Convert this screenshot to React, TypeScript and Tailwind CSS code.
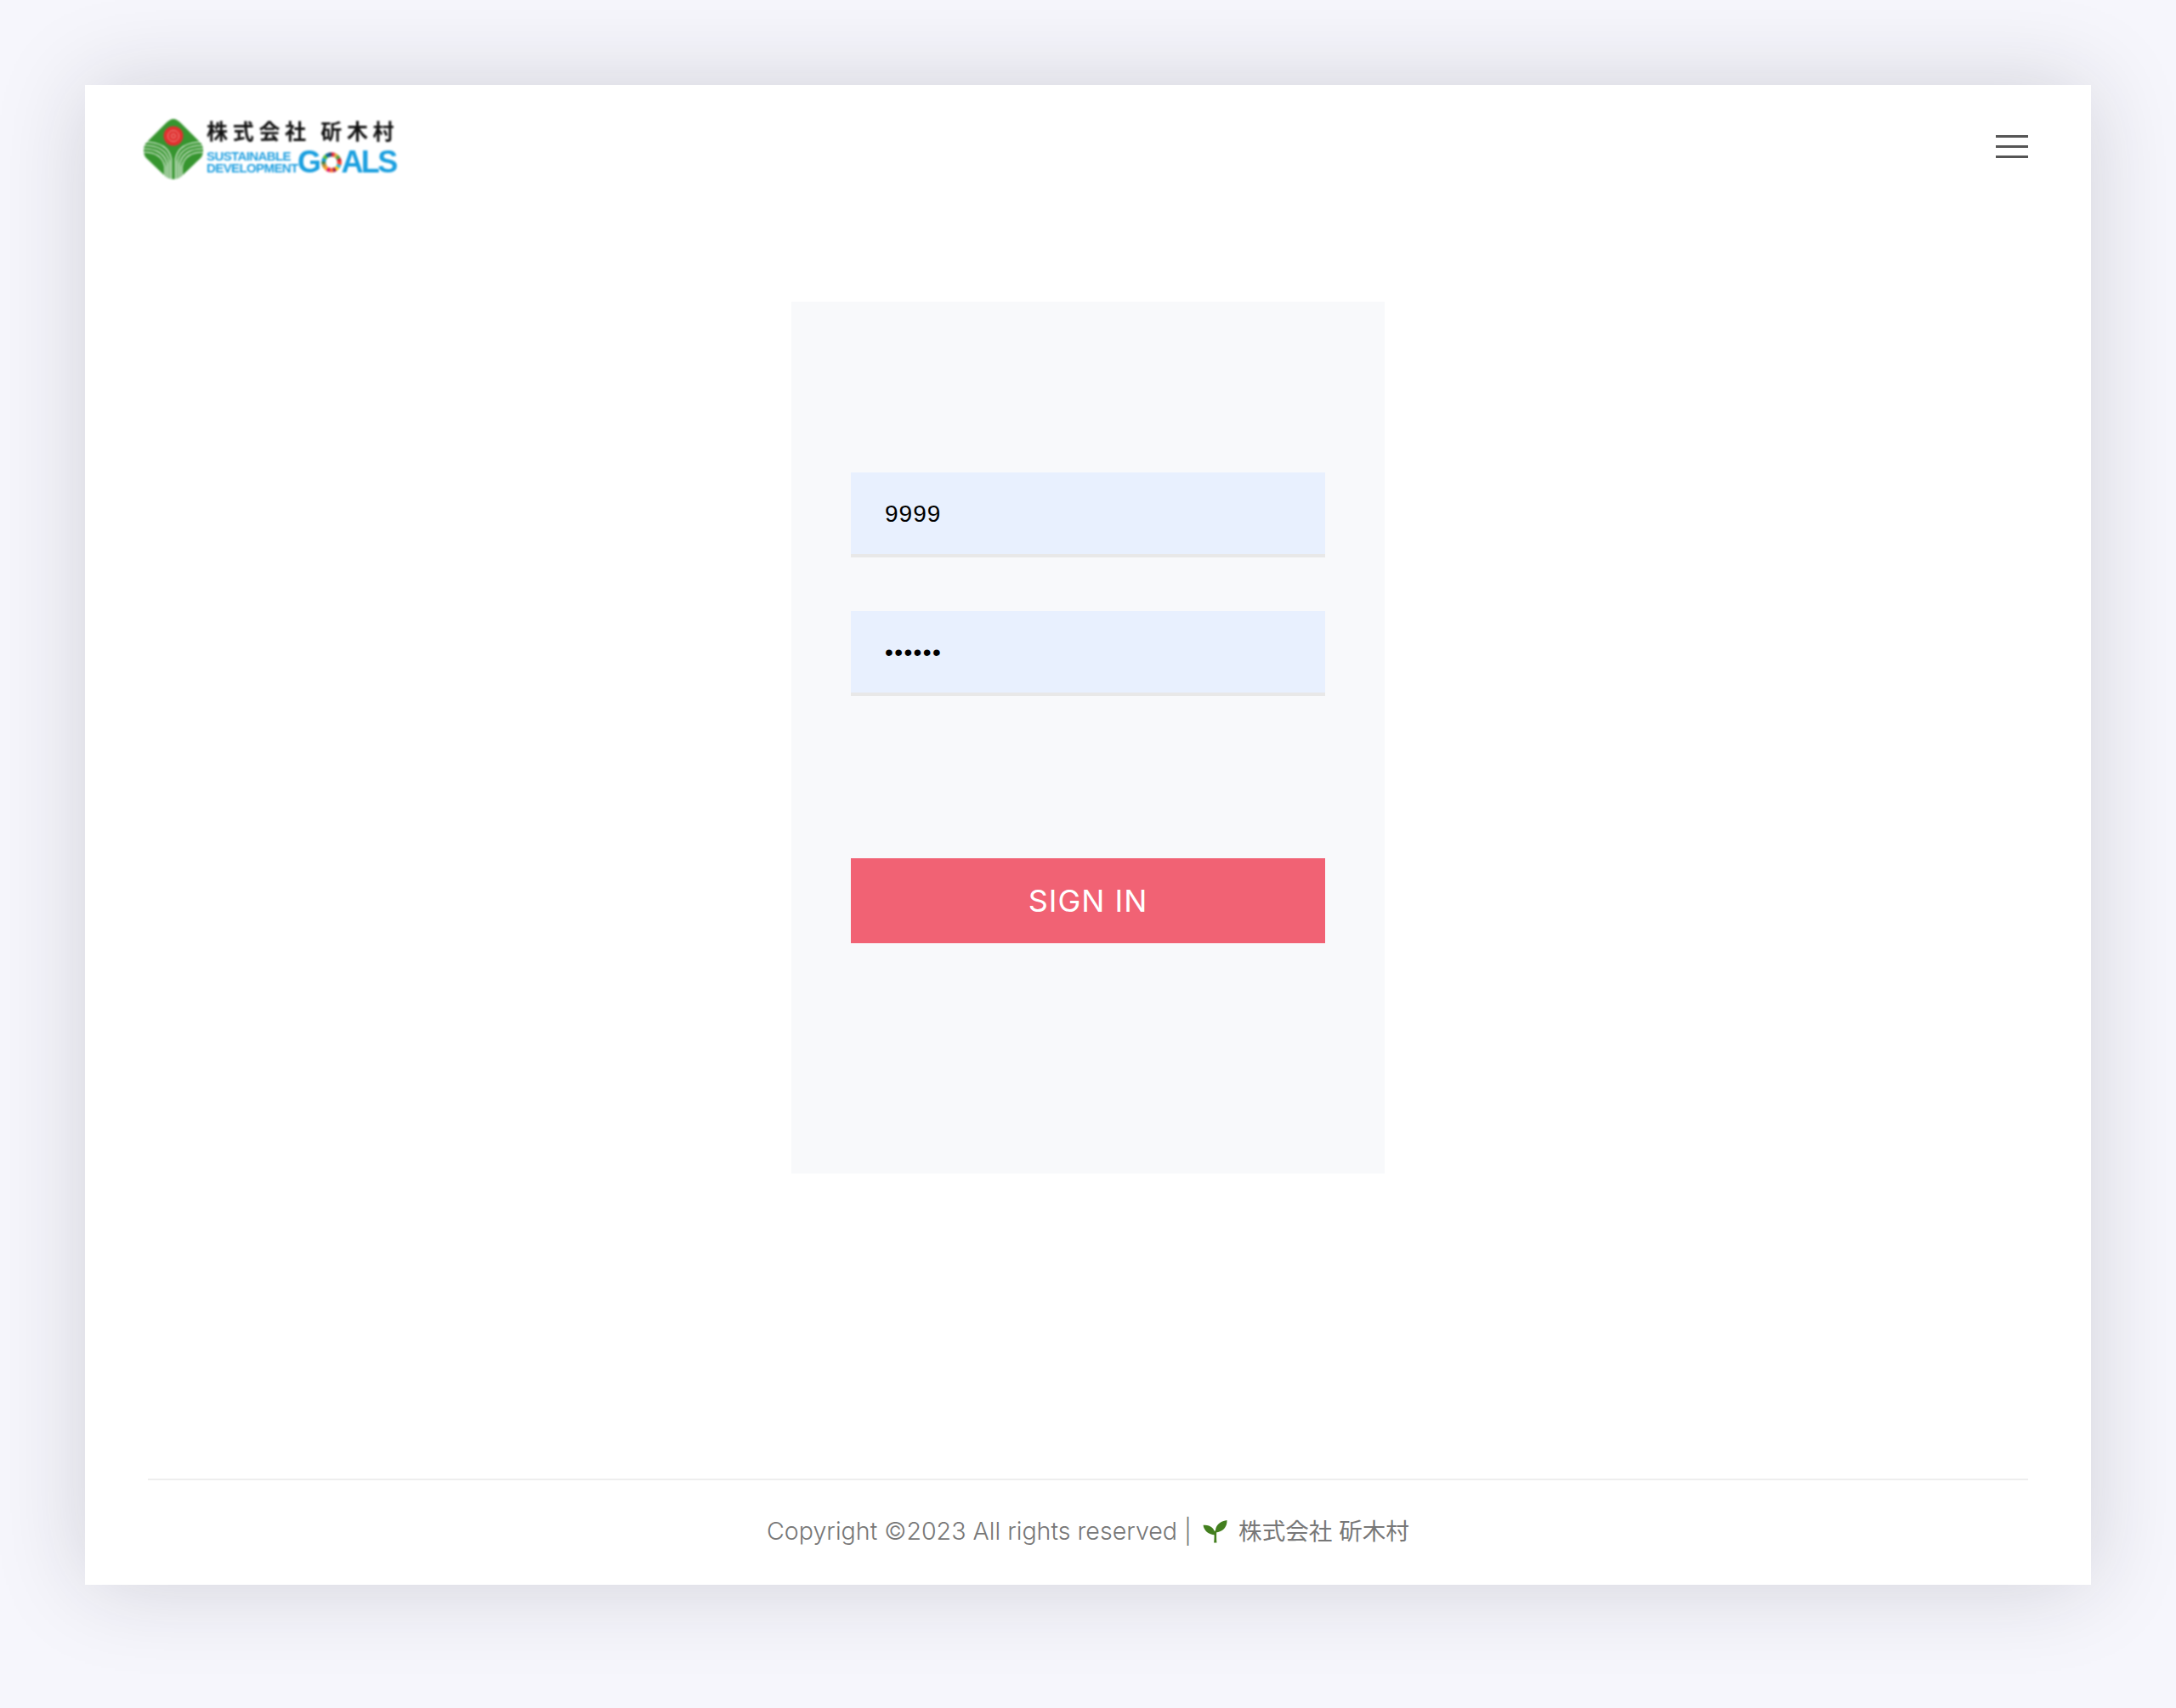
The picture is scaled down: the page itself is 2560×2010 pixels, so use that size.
import React from 'react';

const SdgWheel: React.FC = () => {
  const colors = ['#e5243b', '#dda63a', '#4c9f38', '#c5192d', '#ff3a21', '#26bde2', '#fcc30b', '#a21942', '#fd6925', '#dd1367', '#fd9d24', '#bf8b2e', '#3f7e44', '#0a97d9', '#56c02b', '#00689d', '#19486a'];
  const r = 10;
  const c = 2 * Math.PI * r;
  return (
    <svg viewBox="0 0 28 28" className="w-[26px] h-[26px] shrink-0 -rotate-90">
      {colors.map((color, i) => (
        <circle
          key={color}
          cx="14"
          cy="14"
          r={r}
          fill="none"
          stroke={color}
          strokeWidth="5.5"
          strokeDasharray={`${c / colors.length} ${c}`}
          strokeDashoffset={(-c * i) / colors.length}
        />
      ))}
    </svg>
  );
};

const Mark: React.FC = () => (
  <svg viewBox="0 0 72 74" className="w-[72px] h-[74px] shrink-0 translate-y-[3px]">
    <path d="M36 1C39 1 42 3 45 6L68 29C72 33 72 43 68 47L45 69C40 73 32 73 27 69L4 47C0 43 0 33 4 29L27 6C30 3 33 1 36 1Z" fill="#36952f" />
    <circle cx="36" cy="21" r="11.5" fill="#e0302f" />
    <circle cx="36" cy="21" r="6.5" fill="none" stroke="#f3a9a5" strokeWidth="0.8" />
    <circle cx="36" cy="21" r="2.5" fill="none" stroke="#f3a9a5" strokeWidth="0.8" />
    <g fill="none" stroke="#fff" strokeWidth="1.2">
      <path d="M1 28C20 28 31 34 33.5 48V73" />
      <path d="M1 32C18 32 28.5 38 31 51V73" />
      <path d="M1 36C16 36 26 42 28.5 54V72" />
      <path d="M1 40C14 40 23.5 45 26 57V71" />
      <path d="M71 28C52 28 41 34 38.5 48V73" />
      <path d="M71 32C54 32 43.5 38 41 51V73" />
      <path d="M71 36C56 36 46 42 43.5 54V72" />
      <path d="M71 40C58 40 48.5 45 46 57V71" />
    </g>
  </svg>
);

const Logo: React.FC = () => (
  <div className="flex items-center gap-[3px] blur-[0.8px]">
    <Mark />
    <div className="flex flex-col w-[226px]">
      <div className="text-[25px] leading-[28px] tracking-[5.7px] text-[#111] font-bold whitespace-nowrap font-['Noto_Sans_CJK_JP',sans-serif]">
        株式会社 斫木村
      </div>
      <div className="flex items-center mt-[8px] h-[32px]">
        <div className="w-[107px] shrink-0 text-[#1f9fe0] font-bold text-[15px] leading-[14px] tracking-[-0.6px] font-['Liberation_Sans',sans-serif] whitespace-nowrap">
          <div>SUSTAINABLE</div>
          <div>DEVELOPMENT</div>
        </div>
        <div className="flex items-center text-[#1a9fdf] font-bold text-[36px] leading-[32px] tracking-[-2.6px] font-['Liberation_Sans',sans-serif]">
          <span>G</span>
          <span className="flex ml-[2px] -mr-[2px]"><SdgWheel /></span>
          <span>ALS</span>
        </div>
      </div>
    </div>
  </div>
);

const Sprout: React.FC = () => (
  <svg viewBox="0 0 30 28" className="w-[29px] h-[27px]">
    <path d="M13.6 27.5C14.2 22 14.2 18 13.6 13L16.8 13C16.6 19 16.6 23 17 27.5Z" fill="#437f1f" />
    <path d="M14.8 18C7 17.5 1.5 13 0.5 6C8 5 15 9 14.8 18Z" fill="#437f1f" />
    <path d="M15.6 15C14.5 7 20 1.5 29.5 0C30 8 24.5 14.5 15.6 15Z" fill="#437f1f" />
  </svg>
);

export default function App() {
  return (
    <div className="min-h-[2010px] bg-[#f6f6fc] p-[100px]">
      <div className="h-[1765px] bg-white flex flex-col shadow-[0_0_100px_rgba(30,30,40,0.17)]">
        <header className="h-[145px] flex items-center justify-between pl-[68px] pr-[74px]">
          <Logo />
          <button type="button" aria-label="Menu" className="flex flex-col gap-[9px] w-[38px]">
            <span className="block h-[3px] bg-[#555]"></span>
            <span className="block h-[3px] bg-[#555]"></span>
            <span className="block h-[3px] bg-[#555]"></span>
          </button>
        </header>

        <main className="flex justify-center mt-[110px]">
          <div className="w-[698px] h-[1026px] bg-[#f8f9fb] px-[70px] pt-[201px]">
            <input
              readOnly
              value="9999"
              className="block w-full h-[100px] bg-[#e8f0fe] border-b-4 border-[#e8e8e8] pl-[40px] pr-[40px] pt-[2px] text-[28px] tracking-[1px] text-black outline-none font-['Liberation_Sans',sans-serif]"
            />
            <input
              readOnly
              type="password"
              value="123456"
              className="block w-full h-[100px] mt-[63px] bg-[#e8f0fe] border-b-4 border-[#e8e8e8] pl-[40px] pr-[40px] pt-[2px] text-[28px] tracking-[1.4px] text-black outline-none font-['Liberation_Sans',sans-serif]"
            />
            <button
              type="button"
              className="block w-full h-[100px] mt-[191px] bg-[#f16274] text-white text-[36px] tracking-[1px] font-['Inter',sans-serif]"
            >
              SIGN IN
            </button>
          </div>
        </main>

        <footer className="mt-auto mx-[74px] h-[125px] border-t-2 border-[#eeeeee] flex items-center justify-center text-[#777] font-['Inter','Noto_Sans_CJK_JP',sans-serif] pb-[2px]">
          <span className="text-[28.6px] font-light">Copyright ©2023 All rights reserved |</span>
          <span className="mx-[13px] flex"><Sprout /></span>
          <span className="text-[27.6px]">株式会社 斫木村</span>
        </footer>
      </div>
    </div>
  );
}
